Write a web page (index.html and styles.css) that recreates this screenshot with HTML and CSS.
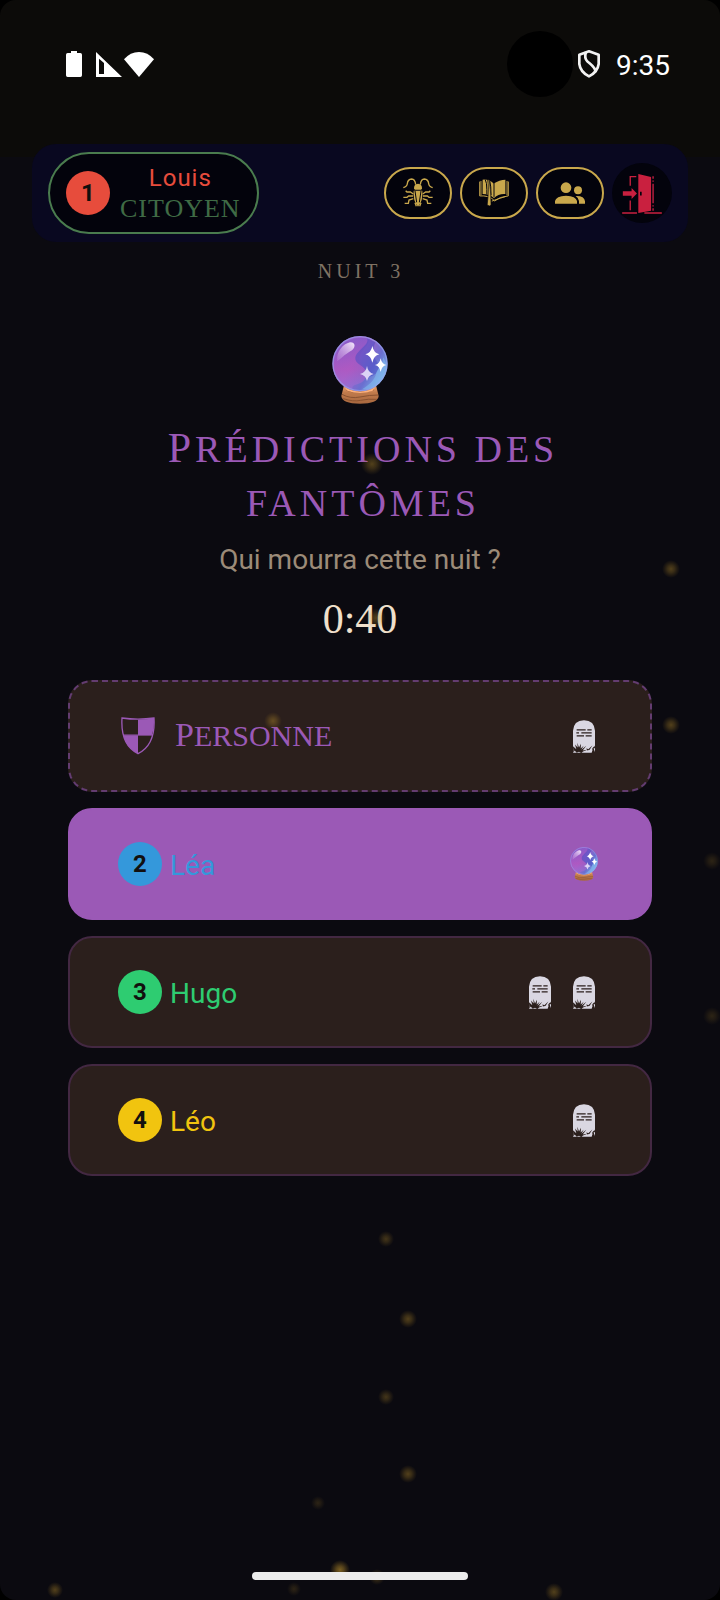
FILE: index.html
```html
<!DOCTYPE html>
<html lang="fr">
<head>
<meta charset="utf-8">
<meta name="viewport" content="width=device-width, initial-scale=1">
<title>Prédictions des fantômes</title>
<link rel="stylesheet" href="styles.css">
</head>
<body>
<svg class="defs" width="0" height="0" aria-hidden="true">
  <defs>
    <radialGradient id="ember"><stop offset="0" stop-color="#c79a2e"/><stop offset=".4" stop-color="#b88d2a" stop-opacity=".7"/><stop offset="1" stop-color="#a07820" stop-opacity="0"/></radialGradient>
    <linearGradient id="glass" x1="0" y1=".2" x2="1" y2=".8"><stop offset="0" stop-color="#8e62cf"/><stop offset=".4" stop-color="#a65fc9"/><stop offset=".7" stop-color="#6a6fd0"/><stop offset="1" stop-color="#7fc4ee"/></linearGradient>
    <linearGradient id="pink" x1="0" y1="0" x2="0" y2="1"><stop offset="0" stop-color="#7d57c8"/><stop offset=".6" stop-color="#b455bd"/><stop offset="1" stop-color="#9a74d8"/></linearGradient>
    <linearGradient id="shine" x1="1" y1="0" x2="0" y2="1"><stop offset="0" stop-color="#f6e9fc"/><stop offset="1" stop-color="#c79be0" stop-opacity=".3"/></linearGradient>
    <linearGradient id="wood" x1="0" y1="0" x2="0" y2="1"><stop offset="0" stop-color="#f0a46e"/><stop offset=".4" stop-color="#c07a4b"/><stop offset="1" stop-color="#a8683f"/></linearGradient>
    <symbol id="ball" viewBox="0 0 168 204">
      <path d="M36 148h96l8 32q-2 23-56 23t-56-23z" fill="url(#wood)"/>
      <path d="M30 175q25 14 54 8t54-6M34 188q30 10 52 5t48-3M44 163q38 14 82-2" fill="none" stroke="#8a5230" stroke-width="3"/>
      <path d="M38 154q46 26 92 0l-8 10q-38 14-76 0z" fill="#ffb27c"/>
      <circle cx="84" cy="83" r="83" fill="url(#glass)"/>
      <path d="M108 6c10 22-26 38-26 62s34 26 20 56-46 14-40 38C20 154 4 118 3 84 4 38 44-2 108 6z" fill="url(#pink)" opacity=".6"/>
      <path d="M104 5c14 20-34 38-34 62s46 24 28 56c36 4 50-28 38-44s-20-26-6-60z" fill="#4a4fc4" opacity=".55"/>
      <path d="M154 64c-4 30-18 32-22 50s-22 34-42 46c40 4 74-30 75-72z" fill="#83bdf0" opacity=".55"/>
      <circle cx="84" cy="83" r="81" fill="none" stroke="#9aa4ee" stroke-width="4" opacity=".65"/>
      <path d="M16 76c-4-28 16-52 38-57 16-1 18 14 6 24-18 10-26 18-44 33z" fill="url(#shine)"/>
      <path d="M121 30q4 21 21 25-17 4-21 25-4-21-21-25 17-4 21-25z" fill="#fff"/>
      <path d="M146 67q3 17 17 20-14 3-17 21-3-18-17-21 14-3 17-20z" fill="#fff"/>
      <path d="M105 90q3 20 20 24-17 4-20 21-3-17-21-21 18-4 21-24z" fill="#dcd3f5"/>
    </symbol>
    <symbol id="tomb" viewBox="0 0 66 98">
      <path d="M0 32Q2 0 33 0t33 32v46l-4 5 4 2v11l-6-10-4 12H0z" fill="#dad7e2"/>
      <path d="M11 29h27M43 29h13M10 38h8M25 38h31M11 47h22M38 47h18" stroke="#2b1f1c" stroke-width="4"/>
      <path d="M0 78l10 9-4-14 8 9-1-14 5 14 6-11-1 14 9-8-7 12 15-12-11 14 16-3-15 6-5 5-7-4-7 3-6-7-4 7z" fill="#2b1f1c"/>
      <path d="M40 84l6 3 12-11-8 13-7 2zM58 84l8-8-4 10 4 10-8-8z" fill="#2b1f1c"/>
    </symbol>
  </defs>
</svg>
<div class="screen">
  <div class="status">
    <div class="status-group">
      <svg class="battery" viewBox="0 0 48 78"><path d="M15 0h18v6h10q5 0 5 5v62q0 5-5 5H5q-5 0-5-5V11q0-5 5-5h10z" fill="#fff"/></svg>
      <svg class="signal" viewBox="0 0 78 75"><path d="M0 0l78 75H0zM9 20v46h15V33z" fill="#fff" fill-rule="evenodd"/></svg>
      <svg class="wifi" viewBox="0 0 90 75"><path d="M0 22Q19 0 45 0t45 22L45 75z" fill="#fff"/></svg>
    </div>
    <div class="status-group">
      <span class="camera"></span>
      <svg class="secure" viewBox="0 0 66 84"><g fill="none" stroke="#f2f2f2" stroke-width="8" stroke-linejoin="round"><path d="M33 4L62 14V42Q59 66 33 79 7 66 4 42V14z"/><path d="M24 6c-4 12-4 20 4 28s26 18 24 32"/></g></svg>
      <time class="clock">9:35</time>
    </div>
  </div>

  <header class="topbar">
    <div class="me">
      <span class="badge red">1</span>
      <div class="who"><span class="who-name">Louis</span><span class="who-role">CITOYEN</span></div>
    </div>
    <nav class="actions">
      <button class="pill" aria-label="Cafard">
        <svg width="30" height="30" viewBox="0 0 90 90" fill="none" stroke="#c9a84c" stroke-width="4"><path d="M38 20Q36 3 26 3 14 4 13 17 12 26 1 29M52 20Q54 3 64 3 76 4 77 17 78 26 89 29M31 48L22 42H12L8 38M30 54H17L12 58H1M31 62L18 66 16 76H5M59 48L68 42H78L82 38M60 54H73L78 58H89M59 62L72 66 74 76H85M36 74L40 85M54 74L50 85"/><path d="M33 32q-1-14 12-15 13 1 12 15l-3 3H36z" fill="#c9a84c" stroke="none"/><path d="M32 38h26q3 29-13 48Q29 67 32 38z" fill="#c9a84c" stroke="none"/><path d="M36 39l5 34M54 39l-5 34" stroke="#03030c" stroke-width="3"/></svg>
      </button>
      <button class="pill" aria-label="Livre">
        <svg width="30" height="28" viewBox="0 0 90 86"><path d="M10 2Q30 0 44 14 62 2 80 2V46Q60 44 45 58 30 46 10 46z" fill="#c9a84c"/><path d="M1 8V52Q28 50 44 64M5 6V50M89 8V52Q62 54 46 68M85 6V50M38 68Q60 60 80 54" fill="none" stroke="#c9a84c" stroke-width="3"/><path d="M18 2Q23 10 23 32V48M45 12V55M32 6Q36 20 36 50" fill="none" stroke="#03030c" stroke-width="3"/><path d="M25 2Q31 22 24 80L31 83 36 80Q35 24 29 2z" fill="#c9a84c" stroke="#03030c" stroke-width="2"/></svg>
      </button>
      <button class="pill" aria-label="Joueurs">
        <svg width="30" height="22" viewBox="0 0 90 66" fill="#c9a84c"><circle cx="33" cy="17" r="16"/><circle cx="69" cy="25" r="12"/><path d="M0 65V57Q3 42 33 41 63 42 66 57V65zM62 42q26-1 28 16v7H72V57q-1-9-10-15z"/></svg>
      </button>
      <button class="exit" aria-label="Quitter">
        <svg width="40" height="41" viewBox="0 0 118 122" fill="#c9203f"><path d="M48 3L86 12V112L48 119zM53 56v11h5V56z" fill-rule="evenodd"/><path d="M2 54H28V45L44 61 28 77V68H2z"/><path d="M24 38V11H42M24 82V111M0 119H44M66 119H118" fill="none" stroke="#c9203f" stroke-width="4"/><path d="M92 10V17M92 22V26M92 32V90M92 96V100M92 105V112" stroke="#a01b38" stroke-width="5"/></svg>
      </button>
    </nav>
  </header>

  <main class="content">
    <p class="night">NUIT 3</p>
    <svg class="hero" aria-hidden="true"><use href="#ball"/></svg>
    <h1 class="title">Prédictions des fantômes</h1>
    <p class="question">Qui mourra cette nuit ?</p>
    <p class="timer">0:40</p>

    <div class="choices">
      <button class="choice none">
        <svg class="shield" viewBox="0 0 102 114"><path d="M3 3Q51 10 99 3 104 84 51 110-2 84 3 3z" fill="none" stroke="#9b59b6" stroke-width="4"/><path d="M51 8Q76 8 99 4 100 34 92 55H51zM7 55H51V110Q14 92 7 55z" fill="#9b59b6"/><path d="M6 54H96" stroke="#9b59b6" stroke-width="3"/></svg>
        <span class="nobody">Personne</span>
        <span class="votes"><svg class="tomb"><use href="#tomb"/></svg></span>
      </button>
      <button class="choice selected">
        <span class="badge blue">2</span><span class="name name-blue">Léa</span>
        <span class="votes"><svg class="mini"><use href="#ball"/></svg></span>
      </button>
      <button class="choice">
        <span class="badge green">3</span><span class="name name-green">Hugo</span>
        <span class="votes"><svg class="tomb"><use href="#tomb"/></svg><svg class="tomb"><use href="#tomb"/></svg></span>
      </button>
      <button class="choice">
        <span class="badge yellow">4</span><span class="name name-yellow">Léo</span>
        <span class="votes"><svg class="tomb"><use href="#tomb"/></svg></span>
      </button>
    </div>
  </main>

  <svg class="embers" viewBox="0 0 720 1600" preserveAspectRatio="none" fill="url(#ember)" aria-hidden="true">
    <g opacity=".38"><circle cx="372" cy="464" r="11"/><circle cx="376" cy="618" r="10"/><circle cx="273" cy="721" r="9"/><circle cx="671" cy="569" r="9"/><circle cx="671" cy="725" r="9"/><circle cx="408" cy="1319" r="9"/><circle cx="408" cy="1474" r="9"/><circle cx="55" cy="1590" r="8"/><circle cx="554" cy="1592" r="9"/></g>
    <g opacity=".3"><circle cx="386" cy="1239" r="8"/><circle cx="386" cy="1397" r="8"/><circle cx="377" cy="1577" r="8"/></g>
    <g opacity=".18"><circle cx="712" cy="861" r="9"/><circle cx="712" cy="1016" r="9"/><circle cx="318" cy="1503" r="7"/><circle cx="294" cy="1589" r="7"/></g>
    <circle cx="340" cy="1570" r="10" opacity=".6"/>
  </svg>
  <div class="home-bar"></div>
</div>
</body>
</html>
```
FILE: styles.css
```css
* { box-sizing: border-box; }
body { margin: 0; background: #000; font-family: Roboto, sans-serif; }
button { font: inherit; color: inherit; cursor: pointer; margin: 0; }
p, h1 { margin: 0; font-weight: 400; }
svg { display: block; flex: none; }
.defs { position: absolute; }

.screen {
  position: relative;
  display: flex;
  flex-direction: column;
  min-height: 100vh;
  overflow: hidden;
  border-radius: 16px;
  background: linear-gradient(#0c0b09 157px, #0b0a10 157px);
}

.status {
  display: flex;
  justify-content: space-between;
  align-items: center;
  height: 128px;
  margin-bottom: 16px;
  padding: 0 50px 0 66px;
}
.status-group { display: flex; align-items: center; }
.battery { width: 16px; height: 26px; margin-right: 14px; }
.signal { width: 26px; height: 25px; margin-right: 2px; }
.wifi { width: 30px; height: 25px; }
.camera { width: 66px; height: 66px; border-radius: 50%; background: #000; }
.secure { width: 22px; height: 28px; margin: 0 16px 0 5px; }
.clock { padding-top: 3px; color: #fff; font-size: 28px; line-height: 32px; }

.topbar {
  display: flex;
  justify-content: space-between;
  align-items: center;
  margin: 0 32px;
  padding: 8px 16px;
  border-radius: 24px;
  background: #090820;
}
.me {
  display: flex;
  align-items: center;
  gap: 10px;
  height: 82px;
  padding: 0 16px;
  border: 2px solid #4a7c4e;
  border-radius: 41px;
  background: #03030c;
}
.who { display: flex; flex-direction: column; align-items: center; padding-top: 2px; }
.who-name { color: #e74c3c; font-size: 24px; line-height: 30px; letter-spacing: 1px; }
.who-role { color: #3f6b45; font: 26px/32px "Liberation Serif", serif; letter-spacing: 1px; }

.badge {
  display: flex;
  flex: none;
  align-items: center;
  justify-content: center;
  width: 44px;
  height: 44px;
  border-radius: 50%;
  color: #12100e;
  font-size: 24px;
  line-height: 28px;
  font-weight: 700;
}
.red { background: #e74c3c; }
.blue { background: #3498db; }
.green { background: #2ecc71; }
.yellow { background: #f1c40f; }

.actions { display: flex; align-items: center; gap: 8px; }
.pill, .exit { display: flex; align-items: center; justify-content: center; padding: 0; background: #03030c; }
.pill { width: 68px; height: 52px; border: 2px solid #c9a84c; border-radius: 26px; }
.exit { width: 60px; height: 60px; border: 0; border-radius: 50%; }

.content { display: flex; flex-direction: column; align-items: center; padding: 15px 68px 0; }
.night { padding-left: 2px; color: #7f7263; font: 20px/28px "Liberation Serif", serif; letter-spacing: 4px; }
.hero { width: 56px; height: 68px; margin: 51px 0 18px; }
.title {
  max-width: 444px;
  padding-left: 6px;
  color: #9b59b6;
  font: 38px/54px "Liberation Serif", serif;
  letter-spacing: 4px;
  text-align: center;
  text-transform: uppercase;
}
.title::first-letter { font-size: 42px; line-height: 38px; }
.question { margin-top: 14px; color: #9c8b78; font-size: 28px; line-height: 32px; }
.timer { margin: 18px 0 36px; color: #f0e0cc; font: 42px/50px "Liberation Serif", serif; }

.choices { display: flex; flex-direction: column; align-self: stretch; gap: 16px; }
.choice {
  display: flex;
  align-items: center;
  gap: 8px;
  width: 100%;
  height: 112px;
  padding: 0 48px;
  border: 2px solid #432842;
  border-radius: 24px;
  background: #2b1f1c;
  text-align: left;
}
.none { border: 2px dashed #633c70; gap: 20px; }
.selected { border-color: #9b59b6; background: #9b59b6; }
.shield { width: 34px; height: 38px; margin-left: 3px; }
.nobody { display: block; color: #9b59b6; font: 30px/40px "Liberation Serif", serif; text-transform: uppercase; }
.nobody::first-letter { font-size: 34px; line-height: 30px; }
.name { padding-top: 4px; font-size: 28px; line-height: 32px; }
.name-blue { color: #3498db; }
.name-green { color: #2ecc71; }
.name-yellow { color: #f1c40f; }
.votes { display: flex; gap: 22px; margin-left: auto; padding-right: 7px; }
.tomb { width: 22px; height: 33px; }
.selected .votes { padding-right: 4px; }
.mini { width: 28px; height: 34px; }

.embers { position: absolute; inset: 0; width: 100%; height: 100%; pointer-events: none; }
.home-bar {
  position: absolute;
  bottom: 20px;
  left: 35%;
  width: 30%;
  height: 8px;
  border-radius: 4px;
  background: #ececec;
}
```
